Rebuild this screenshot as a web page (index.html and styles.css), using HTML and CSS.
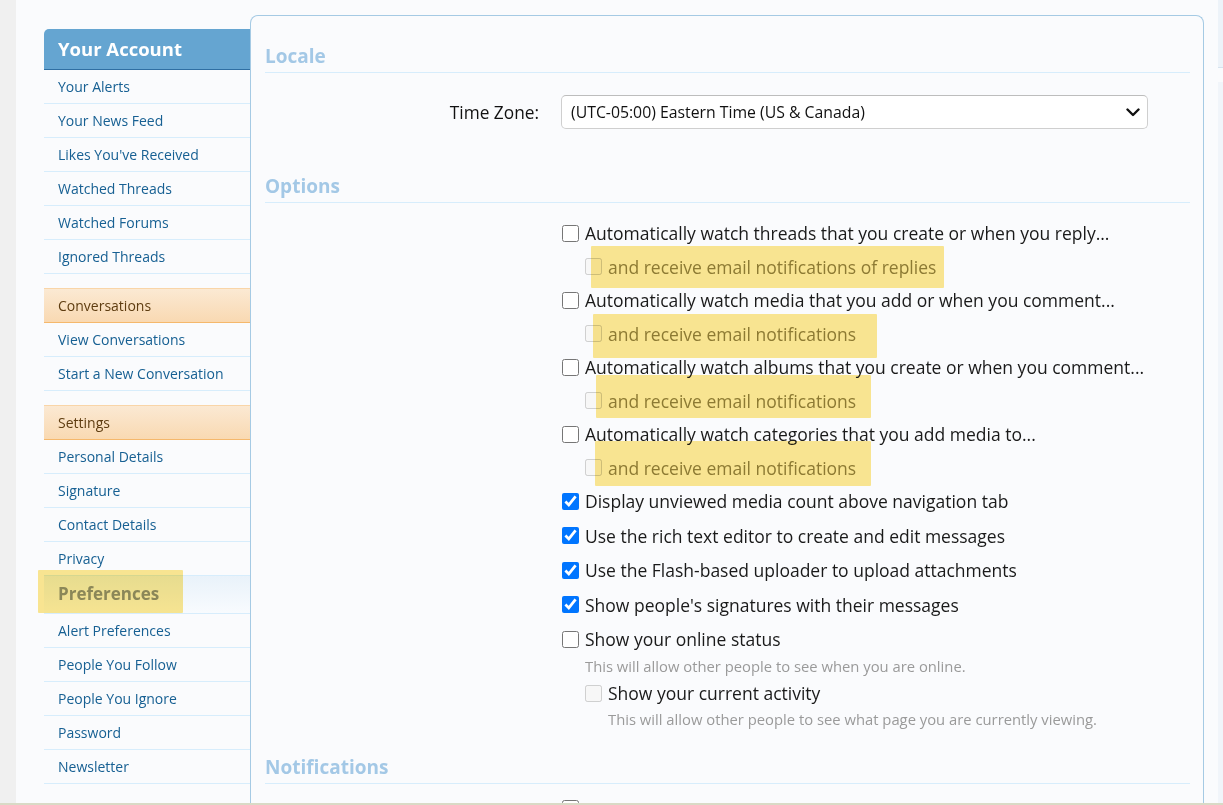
FILE: index.html
```html
<!DOCTYPE html>
<html lang="en">
<head>
<meta charset="utf-8">
<title>Preferences</title>
<link rel="stylesheet" href="styles.css">
</head>
<body>
<div class="page">
  <aside class="sidebar">
    <div class="side-head">Your Account</div>
    <ul class="side-list">
      <li><a href="#">Your Alerts</a></li>
      <li><a href="#">Your News Feed</a></li>
      <li><a href="#">Likes You've Received</a></li>
      <li><a href="#">Watched Threads</a></li>
      <li><a href="#">Watched Forums</a></li>
      <li><a href="#">Ignored Threads</a></li>
    </ul>
    <div class="side-section">Conversations</div>
    <ul class="side-list">
      <li><a href="#">View Conversations</a></li>
      <li><a href="#">Start a New Conversation</a></li>
    </ul>
    <div class="side-section">Settings</div>
    <ul class="side-list">
      <li><a href="#">Personal Details</a></li>
      <li><a href="#">Signature</a></li>
      <li><a href="#">Contact Details</a></li>
      <li><a href="#">Privacy</a></li>
      <li class="selected"><a href="#">Preferences</a><span class="marker marker-pref"></span></li>
      <li><a href="#">Alert Preferences</a></li>
      <li><a href="#">People You Follow</a></li>
      <li><a href="#">People You Ignore</a></li>
      <li><a href="#">Password</a></li>
      <li><a href="#">Newsletter</a></li>
    </ul>
  </aside>

  <main class="main">
    <h3 class="section-title">Locale</h3>
    <div class="ctrl-row">
      <label class="ctrl-label" for="tz">Time Zone:</label>
      <div class="select-wrap">
        <select id="tz" class="select">
          <option>(UTC-05:00) Eastern Time (US &amp; Canada)</option>
        </select>
        <svg class="chevron" width="14" height="9" viewBox="0 0 14 9"><path d="M1.5 1.5 L7 7 L12.5 1.5" fill="none" stroke="#111" stroke-width="2.4" stroke-linecap="round" stroke-linejoin="round"/></svg>
      </div>
    </div>

    <h3 class="section-title options-title">Options</h3>
    <ul class="options">
      <li>
        <label class="opt-line"><input type="checkbox">Automatically watch threads that you create or when you reply...</label>
        <ul class="sub">
          <li class="marked"><label class="opt-line disabled"><input type="checkbox" disabled>and receive email notifications of replies</label><span class="marker marker-1"></span></li>
        </ul>
      </li>
      <li>
        <label class="opt-line"><input type="checkbox">Automatically watch media that you add or when you comment...</label>
        <ul class="sub">
          <li class="marked"><label class="opt-line disabled"><input type="checkbox" disabled>and receive email notifications</label><span class="marker marker-2"></span></li>
        </ul>
      </li>
      <li>
        <label class="opt-line"><input type="checkbox">Automatically watch albums that you create or when you comment...</label>
        <ul class="sub">
          <li class="marked"><label class="opt-line disabled"><input type="checkbox" disabled>and receive email notifications</label><span class="marker marker-3"></span></li>
        </ul>
      </li>
      <li>
        <label class="opt-line"><input type="checkbox">Automatically watch categories that you add media to...</label>
        <ul class="sub">
          <li class="marked"><label class="opt-line disabled"><input type="checkbox" disabled>and receive email notifications</label><span class="marker marker-4"></span></li>
        </ul>
      </li>
      <li><label class="opt-line tall"><input type="checkbox" checked>Display unviewed media count above navigation tab</label></li>
      <li><label class="opt-line tall"><input type="checkbox" checked>Use the rich text editor to create and edit messages</label></li>
      <li><label class="opt-line tall"><input type="checkbox" checked>Use the Flash-based uploader to upload attachments</label></li>
      <li><label class="opt-line tall"><input type="checkbox" checked>Show people's signatures with their messages</label></li>
      <li>
        <label class="opt-line tall"><input type="checkbox">Show your online status</label>
        <p class="hint">This will allow other people to see when you are online.</p>
        <ul class="sub sub-gap">
          <li>
            <label class="opt-line"><input type="checkbox" disabled>Show your current activity</label>
            <p class="hint">This will allow other people to see what page you are currently viewing.</p>
          </li>
        </ul>
      </li>
    </ul>

    <h3 class="section-title notif-title">Notifications</h3>
    <ul class="options options-tight">
      <li class="opt-line"><input type="checkbox" aria-label="Receive news and update emails"></li>
    </ul>
  </main>
  <div class="right-strip"></div>
</div>
<div class="screen-edge"></div>
</body>
</html>
```

FILE: styles.css
```css
html, body {
  margin: 0;
  height: 100%;
  overflow: hidden;
}

body {
  background: #f0f0f0;
  font-family: "Open Sans", "Noto Sans", Arial, sans-serif;
  color: #1a1a1a;
}

ul {
  list-style: none;
  margin: 0;
  padding: 0;
}

a {
  text-decoration: none;
}

.page {
  margin-left: 16px;
  height: 100%;
  background: #fafbfd;
  display: flex;
  align-items: flex-start;
}

/* ---------- Sidebar ---------- */
.sidebar {
  flex: none;
  width: 206px;
  margin: 29px 0 0 28px;
}

.side-head {
  height: 40px;
  line-height: 40px;
  padding-left: 14px;
  background: #65a5d1;
  border-bottom: 1px solid #2f6fa3;
  border-radius: 5px 0 0 0;
  color: #fff;
  font-size: 18.5px;
  font-weight: 700;
}

.side-list li {
  position: relative;
  height: 33px;
  border-bottom: 1px solid #d7edfc;
}

.side-list a {
  display: block;
  padding-left: 14px;
  line-height: 33px;
  font-size: 14px;
  color: #176093;
}

.side-list li.selected {
  height: 37px;
  background: linear-gradient(#e9f2fa, #f8fbfe);
}

.side-list li.selected a {
  line-height: 36px;
  font-size: 17px;
  font-weight: 700;
  color: #8c9499;
}

.side-section {
  margin-top: 14px;
  height: 33px;
  line-height: 33px;
  padding-left: 14px;
  font-size: 14px;
  color: #5e3c10;
  background: linear-gradient(#fbe9d3, #f9d9b2);
  border-top: 1px solid #f9d5a8;
  border-bottom: 1px solid #f5b86c;
}

/* ---------- Main ---------- */
.main {
  flex: 1;
  min-height: 900px;
  margin: 15px 14px 0 0;
  padding: 28px 13px 0 14px;
  border: 1px solid #a5cae4;
  border-bottom: none;
  border-radius: 8px 8px 0 0;
}

.section-title {
  margin: 0;
  padding-bottom: 3px;
  line-height: 25px;
  font-size: 19px;
  font-weight: 700;
  color: #a3c8e6;
  border-bottom: 1px solid #d7edfc;
}

.options-title {
  margin-top: 45px;
}

.notif-title {
  margin-top: 27px;
}

.ctrl-row {
  display: grid;
  grid-template-columns: 274px 1fr;
  column-gap: 22px;
  align-items: center;
  margin-top: 22px;
}

.ctrl-label {
  text-align: right;
  font-size: 17.3px;
  color: #111;
}

.select-wrap {
  position: relative;
  width: 587px;
}

.select {
  display: block;
  width: 100%;
  height: 34px;
  padding: 0 30px 0 9px;
  box-sizing: border-box;
  -webkit-appearance: none;
  appearance: none;
  background: #fff;
  border: 1px solid #cfcfcf;
  border-top-color: #bdbdbd;
  border-radius: 5px;
  font-family: "Open Sans", "Noto Sans", Arial, sans-serif;
  font-size: 15.8px;
  color: #111;
}

.chevron {
  position: absolute;
  right: 8px;
  top: 13px;
  pointer-events: none;
}

/* ---------- Options ---------- */
.options {
  margin: 13px 0 0 296px;
}

.options-tight {
  margin-top: 8px;
}

.opt-line {
  display: flex;
  align-items: center;
  height: 34px;
  font-size: 17.5px;
  color: #1a1a1a;
  white-space: nowrap;
}

.opt-line.tall {
  height: 34.5px;
}

.opt-line input {
  flex: none;
  width: 17px;
  height: 17px;
  margin: 0 6px 0 1px;
}

.sub {
  margin-left: 23px;
}

.sub .opt-line {
  height: 33px;
}

.sub-gap {
  margin-top: 2px;
}

.opt-line.disabled {
  color: #8e8658;
}

.hint {
  margin: 0;
  padding-left: 24px;
  line-height: 18px;
  font-size: 14.8px;
  color: #9a9a9a;
  white-space: nowrap;
}

/* ---------- Highlighter marks ---------- */
.marked {
  position: relative;
}

.marker {
  position: absolute;
  background: #fde892;
  mix-blend-mode: multiply;
  pointer-events: none;
  border-radius: 1px;
}

.marker-1 { left: 7px;  top: -4px;  width: 353px; height: 42px; }
.marker-2 { left: 9px;  top: -3px;  width: 284px; height: 44px; }
.marker-3 { left: 12px; top: -9px;  width: 275px; height: 43px; }
.marker-4 { left: 11px; top: -10px; width: 276px; height: 45px; }
.marker-pref { left: -6px; top: -6px; width: 145px; height: 43px; }

/* ---------- Edges ---------- */
.right-strip {
  flex: none;
  width: 5px;
  height: 100%;
  background: linear-gradient(#edf3f9 0, #edf3f9 67px, #d6e3ef 67px, #d6e3ef 68px, #fafbfd 68px, #fafbfd 82px, #f1f5fa 82px);
}

.screen-edge {
  position: fixed;
  left: 0;
  right: 0;
  bottom: 0;
  height: 2px;
  background: #d9dac6;
}
```
